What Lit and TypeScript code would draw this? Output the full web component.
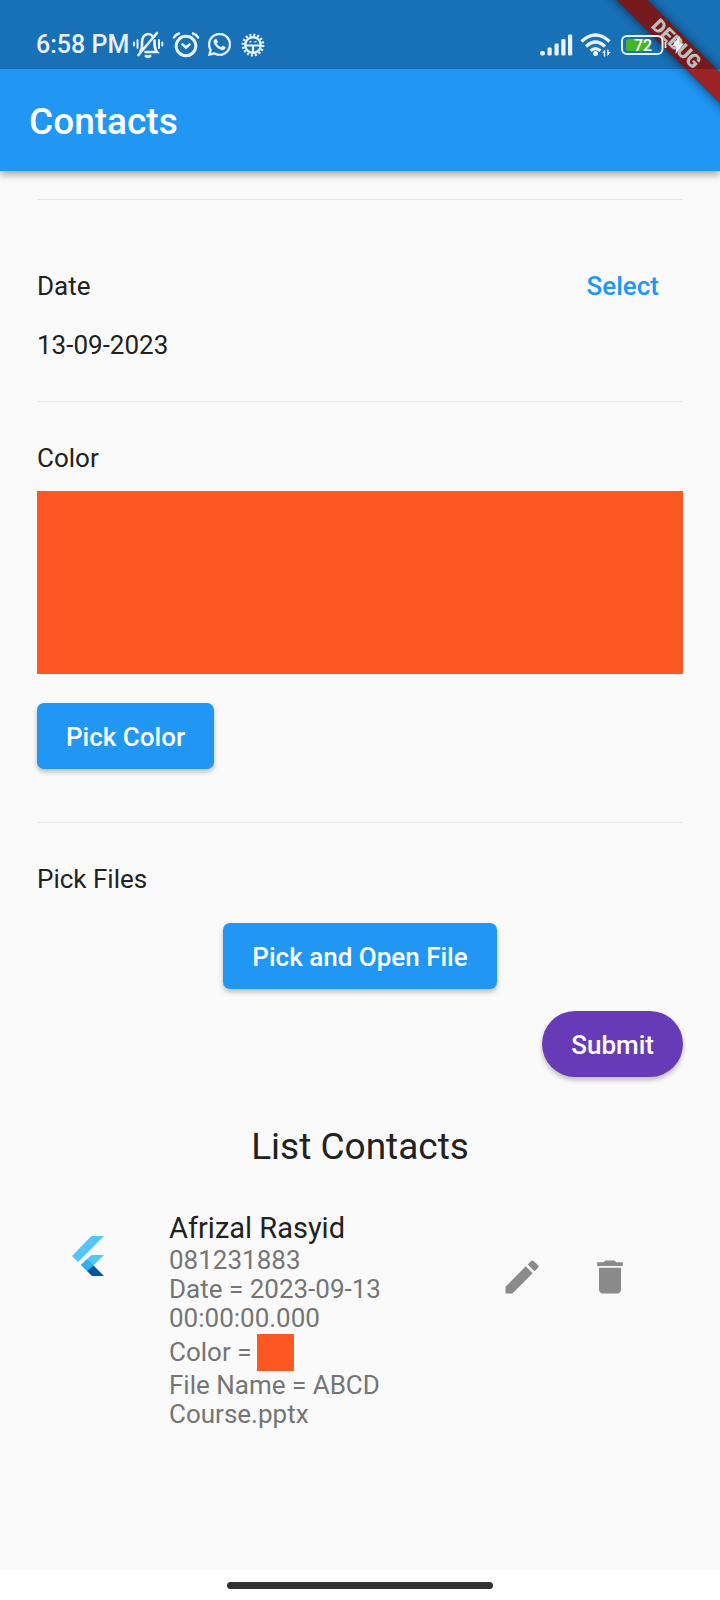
import { LitElement, html, css } from "lit";
import { customElement, state } from "lit/decorators.js";

@customElement("status-bar")
class StatusBar extends LitElement {
  static styles = css`
    :host {
      display: flex;
      align-items: center;
      height: 69px;
      padding: 20px 35px 0 36px;
      box-sizing: border-box;
      background: rgba(0, 0, 0, 0.25);
      color: #e9f3fc;
    }
    .time {
      font-size: 25px;
      line-height: 30px;
      font-weight: 500;
      white-space: nowrap;
    }
    .left,
    .right {
      display: flex;
      align-items: center;
      gap: 7px;
    }
    .clock {
      display: flex;
      align-items: center;
      gap: 3px;
    }
    .right {
      margin-left: auto;
    }
    svg {
      display: block;
      flex: none;
    }
    .level {
      font-size: 16px;
      font-weight: 500;
    }
  `;
  render() {
    return html`
      <div class="left">
        <div class="clock">
          <span class="time">6:58 PM</span>
          <svg width="32" height="28" viewBox="0 0 32 28" fill="none" stroke="currentColor" stroke-width="2.6" stroke-linecap="round">
            <path d="M8.500 20 C10.500 18 10 15 10 11 C10 6 13 3 16 3 C18 3 19.500 3.700 20.500 5 M22.500 9.500 C22.500 15 22.500 18 25 21 H13.500" />
            <path d="M25 2 L6.500 24" />
            <path d="M14 25 C15 26 17 26 18 25" stroke-width="3" />
            <path d="M2 11.500 V14.500 M5.500 9 V17 M27 9 V17 M30.300 11.500 V14.500" stroke-width="2" />
          </svg>
        </div>
        <svg width="30" height="28" viewBox="0 0 30 28" fill="none" stroke="currentColor" stroke-width="3" stroke-linecap="round">
          <circle cx="15" cy="15" r="9.800" />
          <path d="M3 6.500 Q4.500 3.500 8 2.500 M27 6.500 Q25.500 3.500 22 2.500" stroke-width="2.600" />
          <path d="M11.500 13.500 L15 16.500 L18.500 13.500" stroke-width="2.600" />
        </svg>
        <svg width="23" height="23" viewBox="0 0 24 24" fill="currentColor" stroke="currentColor" stroke-width="0.400">
          <path d="M17.472 14.382c-.297-.149-1.758-.867-2.030-.967-.273-.099-.471-.148-.67.150-.197.297-.767.966-.940 1.164-.173.199-.347.223-.644.075-.297-.150-1.255-.463-2.390-1.475-.883-.788-1.480-1.761-1.653-2.059-.173-.297-.018-.458.130-.606.134-.133.298-.347.446-.520.149-.174.198-.298.298-.497.099-.198.050-.371-.025-.520-.075-.149-.669-1.612-.916-2.207-.242-.579-.487-.500-.669-.510-.173-.008-.371-.010-.570-.010-.198 0-.520.074-.792.372-.272.297-1.040 1.016-1.040 2.479 0 1.462 1.065 2.875 1.213 3.074.149.198 2.096 3.200 5.077 4.487.709.306 1.262.489 1.694.625.712.227 1.360.195 1.871.118.571-.085 1.758-.719 2.006-1.413.248-.694.248-1.289.173-1.413-.074-.124-.272-.198-.570-.347m-5.421 7.403h-.004a9.870 9.870 0 0 1-5.031-1.378l-.361-.214-3.741.982.998-3.648-.235-.374a9.860 9.860 0 0 1-1.510-5.260c.001-5.450 4.436-9.884 9.888-9.884 2.640 0 5.122 1.030 6.988 2.898a9.825 9.825 0 0 1 2.893 6.994c-.003 5.450-4.437 9.884-9.885 9.884m8.413-18.297A11.815 11.815 0 0 0 12.050 0C5.495 0 .160 5.335.157 11.892c0 2.096.547 4.142 1.588 5.945L.057 24l6.305-1.654a11.882 11.882 0 0 0 5.683 1.448h.005c6.554 0 11.890-5.335 11.893-11.893a11.821 11.821 0 0 0-3.480-8.413z" />
        </svg>
        <svg width="30" height="26" viewBox="0 0 30 26" fill="none" stroke="currentColor">
          <circle cx="15" cy="13" r="7.800" stroke-width="2.400" />
          <circle cx="15" cy="13" r="10" stroke-width="2.800" stroke-dasharray="2 1.927" />
          <path d="M7.500 13.500 H22.500 M15 13.500 V21" stroke-width="2.200" />
          <path d="M11.500 9.800 h2 M16.500 9.800 h2" stroke-width="1.600" />
        </svg>
      </div>
      <div class="right">
        <svg width="33" height="22" viewBox="0 0 33 22" fill="currentColor">
          <rect x="0" y="17" width="5" height="4.500" rx="2" />
          <rect x="7.500" y="13.500" width="4.200" height="8" rx="1.200" />
          <rect x="14.500" y="9.500" width="4.200" height="12" rx="1.200" />
          <rect x="21.300" y="5" width="4.200" height="16.500" rx="1.200" />
          <rect x="28" y="0.500" width="4.200" height="21" rx="1.200" />
        </svg>
        <svg width="32" height="24" viewBox="0 0 32 24" fill="none" stroke="currentColor" stroke-width="3.200">
          <path d="M1.500 8.500 Q15.500 -4.500 29.500 8.500" />
          <path d="M6 13.500 Q15.500 4.500 25 13.500" />
          <path d="M10.500 17.800 Q15.500 13.500 20.500 17.800" />
          <circle cx="15.500" cy="20.500" r="2.500" fill="currentColor" stroke="none" />
          <path d="M22 20 L25.200 16.500 V23.500 H23.800 V20Z M30.500 19 L27.200 23.500 V16.500 H28.600 V19Z" fill="currentColor" stroke="none" />
        </svg>
        <svg width="66" height="24" viewBox="0 0 66 24">
          <rect x="3" y="3" width="40.500" height="18" rx="5" fill="none" stroke="currentColor" stroke-width="2" />
          <path d="M9.500 6 H31 V18 H9.500 Q7 18 7 15.500 V8.500 Q7 6 9.500 6Z" fill="#43b722" />
          <text class="level" x="24" y="18" text-anchor="middle" fill="#fff">72</text>
          <path d="M46.500 9 V15" stroke="currentColor" stroke-width="1.800" />
          <path d="M60.500 3 L53 13 H57.500 L56.500 21 L65 10.500 H60.500Z" fill="currentColor" />
        </svg>
      </div>
    `;
  }
}

interface Contact {
  name: string;
  phone: string;
  date: string;
  color: string;
  file: string;
}

@customElement("contact-tile")
class ContactTile extends LitElement {
  static properties = { contact: { attribute: false } };
  declare contact: Contact;
  static styles = css`
    :host {
      display: flex;
      align-items: flex-start;
      padding: 0 51px 0 29px;
    }
    .logo {
      display: block;
      flex: none;
      margin-top: 26px;
    }
    .info {
      flex: 1;
      min-width: 0;
      margin: 0 50px 0 63px;
      font-size: 26px;
      line-height: 29px;
      color: #757575;
    }
    .name {
      margin: 0;
      font-size: 29px;
      line-height: 36px;
      font-weight: 400;
      color: #212121;
    }
    p {
      margin: 0;
    }
    .color {
      display: flex;
      align-items: center;
      gap: 6px;
      padding-top: 1px;
    }
    .swatch {
      width: 37px;
      height: 37px;
    }
    .actions {
      display: flex;
      gap: 44px;
      margin-top: 45px;
    }
    .action {
      padding: 0;
      border: 0;
      background: none;
      color: #8a8a8a;
      cursor: pointer;
    }
    .action svg {
      display: block;
    }
  `;
  render() {
    const c = this.contact;
    return html`
      <svg class="logo" width="40" height="40" viewBox="0 0 40 40" role="img" aria-label="Flutter">
        <path d="M25.500 0 H38 L12 26 L6 20Z" fill="#54c5f8" />
        <path d="M25.500 19 H38 L27.500 29.500 L21 35 L15 29Z" fill="#54c5f8" />
        <path d="M15 29 L21 23 L27.500 29.500 L21 35Z" fill="#2eb0f2" />
        <path d="M21 35 L27.500 29.500 L38 40 H26Z" fill="#01579b" />
      </svg>
      <div class="info">
        <h3 class="name">${c.name}</h3>
        <p>${c.phone}</p>
        <p>Date = ${c.date}</p>
        <p class="color">Color = <span class="swatch" style="background:${c.color}"></span></p>
        <p>File Name = ${c.file}</p>
      </div>
      <div class="actions">
        <button class="action" type="button" aria-label="Edit">
          <svg width="44" height="44" viewBox="0 0 24 24" fill="currentColor">
            <path d="M3 17.250V21h3.750L17.810 9.940l-3.750-3.750L3 17.250zM20.710 7.040c.390-.390.390-1.020 0-1.410l-2.340-2.340c-.390-.390-1.020-.390-1.410 0l-1.830 1.830 3.750 3.750 1.830-1.830z" />
          </svg>
        </button>
        <button class="action" type="button" aria-label="Delete">
          <svg width="44" height="44" viewBox="0 0 24 24" fill="currentColor">
            <path d="M6 19c0 1.100.900 2 2 2h8c1.100 0 2-.900 2-2V7H6v12zM19 4h-3.500l-1-1h-5l-1 1H5v2h14V4z" />
          </svg>
        </button>
      </div>
    `;
  }
}

@customElement("app-root")
class AppRoot extends LitElement {
  @state() private color = "#ff5722";
  @state() private date = "13-09-2023";
  @state() private contacts: Contact[] = [
    {
      name: "Afrizal Rasyid",
      phone: "081231883",
      date: "2023-09-13 00:00:00.000",
      color: "#ff5722",
      file: "ABCD Course.pptx",
    },
  ];

  static styles = css`
    :host {
      display: flex;
      flex-direction: column;
      min-height: 100vh;
      background: #fafafa;
      color: #212121;
      font-family: Roboto, "Noto Sans", sans-serif;
      font-size: 26px;
      line-height: 30px;
    }
    .header {
      position: relative;
      background: #2196f3;
      box-shadow: 0 4px 7px rgba(0, 0, 0, 0.32);
    }
    status-bar {
      position: relative;
    }
    .title {
      margin: 0;
      padding: 32px 29px 28px;
      font-size: 37px;
      line-height: 42px;
      font-weight: 500;
      color: #fff;
    }
    .corner {
      position: absolute;
      top: 0;
      right: 0;
      width: 140px;
      height: 140px;
      overflow: hidden;
      pointer-events: none;
    }
    .banner {
      position: absolute;
      top: 33px;
      right: -56px;
      width: 200px;
      height: 22px;
      transform: rotate(45deg);
      background: #9d2227;
      box-shadow: 0 0 11px rgba(0, 0, 0, 0.6);
      color: #fff;
      font-size: 19px;
      line-height: 22px;
      font-weight: 900;
      text-align: center;
    }
    .body {
      flex: 1;
      display: flex;
      flex-direction: column;
      padding: 28px 37px 26px;
    }
    .rule {
      width: 100%;
      height: 1px;
      margin: 0;
      border: 0;
      background: #e6e6e6;
    }
    h2,
    p {
      margin: 0;
      font-size: 26px;
      line-height: 30px;
      font-weight: 400;
    }
    .section {
      display: flex;
      flex-direction: column;
      align-items: flex-start;
      padding: 41px 0 53px;
    }
    .date {
      padding: 53px 0 41px;
    }
    .files {
      padding-bottom: 0;
    }
    .row {
      display: flex;
      align-items: center;
      justify-content: space-between;
      align-self: stretch;
      height: 66px;
      margin-bottom: 11px;
    }
    .link {
      padding: 16px 24px;
      border: 0;
      background: none;
      color: #2196f3;
      font: 500 26px/30px Roboto, sans-serif;
      cursor: pointer;
    }
    .preview {
      align-self: stretch;
      height: 183px;
      margin: 18px 0 29px;
    }
    .button {
      height: 66px;
      padding: 2px 29px 0;
      border: 0;
      border-radius: 7px;
      background: #2196f3;
      box-shadow: 0 3px 5px rgba(0, 0, 0, 0.25);
      color: #fff;
      font: 500 26px/30px Roboto, sans-serif;
      cursor: pointer;
    }
    .open {
      align-self: center;
      margin: 29px 0 22px;
    }
    .submit {
      align-self: flex-end;
      border-radius: 33px;
      background: #673ab7;
    }
    .heading {
      margin: 48px 0 41px;
      font-size: 37px;
      line-height: 44px;
      text-align: center;
    }
    .nav {
      display: flex;
      justify-content: center;
      padding: 12px 0 11px;
      background: #fff;
    }
    .handle {
      width: 37%;
      height: 7px;
      border-radius: 4px;
      background: #303131;
    }
  `;

  render() {
    return html`
      <header class="header">
        <div class="corner"><div class="banner">DEBUG</div></div>
        <status-bar></status-bar>
        <h1 class="title">Contacts</h1>
      </header>
      <main class="body">
        <hr class="rule" />
        <section class="section date">
          <div class="row">
            <h2>Date</h2>
            <button class="link" type="button">Select</button>
          </div>
          <p>${this.date}</p>
        </section>
        <hr class="rule" />
        <section class="section">
          <h2>Color</h2>
          <div class="preview" style="background:${this.color}"></div>
          <button class="button" type="button">Pick Color</button>
        </section>
        <hr class="rule" />
        <section class="section files">
          <h2>Pick Files</h2>
          <button class="button open" type="button">Pick and Open File</button>
          <button class="button submit" type="button">Submit</button>
        </section>
        <h2 class="heading">List Contacts</h2>
        ${this.contacts.map((c) => html`<contact-tile .contact=${c}></contact-tile>`)}
      </main>
      <footer class="nav"><div class="handle"></div></footer>
    `;
  }
}
